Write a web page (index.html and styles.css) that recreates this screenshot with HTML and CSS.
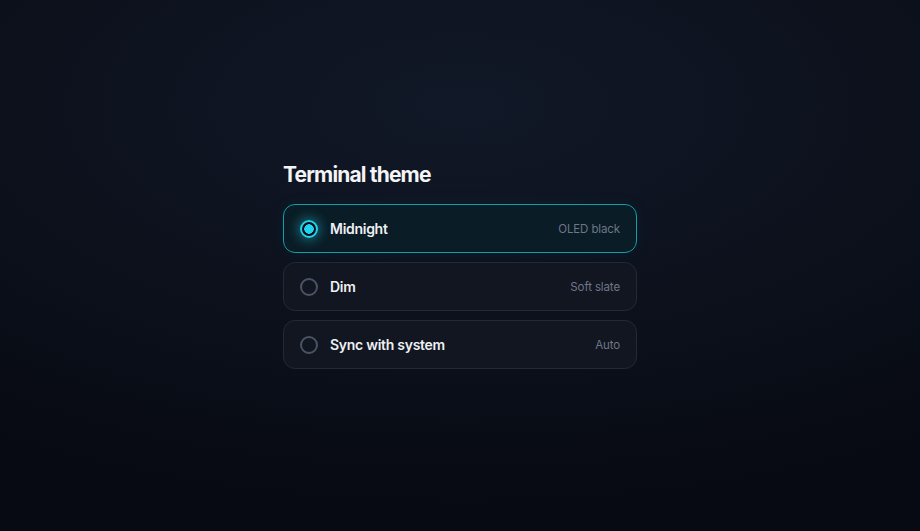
FILE: index.html
```html
<!DOCTYPE html>
<html lang="en">
<head>
<meta charset="utf-8">
<title>Terminal theme</title>
<link rel="stylesheet" href="styles.css">
</head>
<body>
<main class="page">
  <section class="panel">
    <h1 class="title">Terminal theme</h1>
    <div class="options" role="radiogroup">
      <div class="option is-selected" role="radio" aria-checked="true">
        <span class="radio"></span>
        <span class="label">Midnight</span>
        <span class="hint">OLED black</span>
      </div>
      <div class="option" role="radio" aria-checked="false">
        <span class="radio"></span>
        <span class="label">Dim</span>
        <span class="hint">Soft slate</span>
      </div>
      <div class="option" role="radio" aria-checked="false">
        <span class="radio"></span>
        <span class="label">Sync with system</span>
        <span class="hint">Auto</span>
      </div>
    </div>
  </section>
</main>
</body>
</html>
```

FILE: styles.css
```css
* { box-sizing: border-box; }
html, body { margin: 0; height: 100%; }
body {
  font-family: Inter, "Noto Sans", sans-serif;
  background: radial-gradient(ellipse 90% 75% at 50% 20%, #111827 0%, #0c111c 55%, #070a12 100%);
  color: #f3f4f6;
}
.page {
  height: 100%;
  display: flex;
  align-items: center;
  justify-content: center;
}
.panel {
  width: 354px;
  margin-top: -1px;
}
.title {
  margin: 0 0 15px;
  font-size: 21px;
  line-height: 28px;
  font-weight: 700;
  letter-spacing: -0.04em;
  color: #f3f4f6;
}
.options {
  display: flex;
  flex-direction: column;
  gap: 9px;
}
.option {
  height: 49px;
  display: flex;
  align-items: center;
  padding: 0 16px;
  border: 1px solid #232937;
  border-radius: 12px;
  background: #121621;
}
.option.is-selected {
  border-color: #0f9fab;
  background: #0a1c25;
  box-shadow: 0 0 18px rgba(34, 211, 238, 0.05);
}
.radio {
  width: 18px;
  height: 18px;
  flex: none;
  border-radius: 50%;
  border: 2px solid #4a5365;
  margin-right: 12px;
}
.is-selected .radio {
  border: 2px solid #22d3ee;
  background: radial-gradient(circle, #22d3ee 0 4.5px, #071016 5px);
  box-shadow: 0 0 12px 2px rgba(34, 211, 238, 0.45);
}
.label {
  flex: 1;
  font-size: 14px;
  font-weight: 600;
  letter-spacing: -0.02em;
  color: #eef0f4;
}
.hint {
  font-size: 11.5px;
  letter-spacing: -0.01em;
  color: #6e7688;
}
```
